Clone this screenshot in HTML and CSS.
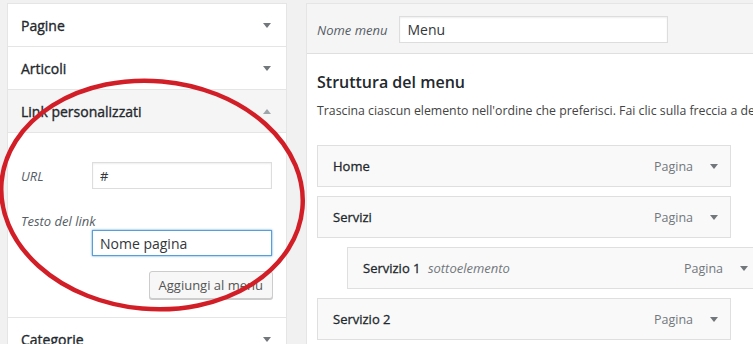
FILE: index.html
```html
<!DOCTYPE html>
<html lang="it">
<head>
<meta charset="utf-8">
<title>Menu</title>
<link rel="stylesheet" href="styles.css">
</head>
<body>
<div class="page">
  <div class="side">
    <div class="acc">
      <div class="acc-h"><span class="acc-t">Pagine</span><span class="arr down"></span></div>
    </div>
    <div class="acc">
      <div class="acc-h"><span class="acc-t">Articoli</span><span class="arr down"></span></div>
    </div>
    <div class="acc open">
      <div class="acc-h"><span class="acc-t">Link personalizzati</span><span class="arr up"></span></div>
      <div class="acc-body">
        <div class="field">
          <span class="lbl">URL</span>
          <input class="inp" type="text" value="#">
        </div>
        <div class="field stacked">
          <span class="lbl">Testo del link</span>
          <input class="inp focus" type="text" value="Nome pagina">
        </div>
        <div class="actions">
          <button class="btn" type="button">Aggiungi al menu</button>
        </div>
      </div>
    </div>
    <div class="acc">
      <div class="acc-h"><span class="acc-t">Categorie</span><span class="arr down"></span></div>
    </div>
  </div>

  <div class="main">
    <div class="main-head">
      <span class="lbl">Nome menu</span>
      <input class="inp name" type="text" value="Menu">
    </div>
    <div class="main-body">
      <h3 class="title">Struttura del menu</h3>
      <p class="desc">Trascina ciascun elemento nell'ordine che preferisci. Fai clic sulla freccia a destra dell'elemento per visualizzare altre opzioni di configurazione.</p>
      <ul class="menu">
        <li class="item"><span class="it-title">Home</span><span class="it-type">Pagina</span><span class="arr down"></span></li>
        <li class="item"><span class="it-title">Servizi</span><span class="it-type">Pagina</span><span class="arr down"></span></li>
        <li class="item sub"><span class="it-title">Servizio 1 <em class="subtag">sottoelemento</em></span><span class="it-type">Pagina</span><span class="arr down"></span></li>
        <li class="item"><span class="it-title">Servizio 2</span><span class="it-type">Pagina</span><span class="arr down"></span></li>
      </ul>
    </div>
  </div>

  <svg class="annot" width="753" height="344" viewBox="0 0 753 344" aria-hidden="true">
    <ellipse cx="152" cy="195" rx="151" ry="114" transform="rotate(5 152 195)" fill="none" stroke="#d21f27" stroke-width="4.5"/>
  </svg>
</div>
</body>
</html>
```

FILE: styles.css
```css
html, body {
  margin: 0;
  padding: 0;
}
body {
  background: #f1f1f1;
  font-family: "Open Sans", "Noto Sans", sans-serif;
  color: #23282d;
  font-size: 13px;
  overflow: hidden;
  width: 753px;
  height: 344px;
}
.page {
  position: relative;
  display: flex;
  align-items: flex-start;
  gap: 19px;
  padding: 3px 0 0 7px;
  width: 753px;
  height: 344px;
  box-sizing: border-box;
  overflow: hidden;
}
.side {
  width: 280px;
  flex: none;
  background: #fff;
  border: 1px solid #e5e5e5;
  border-bottom: none;
  box-sizing: border-box;
}
.acc {
  border-bottom: 1px solid #e5e5e5;
}
.acc-h {
  height: 42px;
  display: flex;
  align-items: center;
  justify-content: space-between;
  padding: 0 15px 0 13px;
  box-sizing: border-box;
  font-size: 14px;
  font-weight: 400;
  -webkit-text-stroke: 0.35px currentColor;
  color: #23282d;
}
.open .acc-h {
  background: #f5f5f5;
  border-bottom: 1px solid #e5e5e5;
  height: 43px;
}
.arr {
  width: 0;
  height: 0;
  border-left: 4px solid transparent;
  border-right: 4px solid transparent;
  flex: none;
}
.arr.down {
  border-top: 5px solid #72777c;
}
.arr.up {
  border-bottom: 5px solid #a0a5aa;
}
.acc-body {
  padding: 29px 14px 18px 13px;
}
.field {
  display: flex;
  align-items: center;
}
.lbl {
  font-style: italic;
  color: #555d66;
  font-size: 13px;
}
.field .lbl {
  width: 71px;
  flex: none;
}
.inp {
  font-family: inherit;
  font-size: 13px;
  color: #32373c;
  border: 1px solid #ddd;
  box-shadow: inset 0 1px 2px rgba(0, 0, 0, 0.07);
  background: #fff;
  height: 27px;
  padding: 0 7px;
  box-sizing: border-box;
  margin: 0;
  outline: none;
  border-radius: 0;
}
.field .inp {
  flex: 1;
  min-width: 0;
}
.field.stacked {
  flex-direction: column;
  align-items: stretch;
  margin-top: 23px;
}
.field.stacked .lbl {
  width: auto;
  line-height: 18px;
}
.field.stacked .inp {
  margin-left: 71px;
  height: 26px;
  flex: none;
  font-size: 14px;
}
.inp.focus {
  border-color: #5b9dd9;
  box-shadow: 0 0 2px rgba(30, 140, 190, 0.8);
}
.actions {
  display: flex;
  justify-content: flex-end;
  margin-top: 15px;
  margin-right: -1px;
}
.btn {
  font-family: inherit;
  font-size: 13px;
  color: #555;
  background: #f7f7f7;
  border: 1px solid #ccc;
  border-radius: 3px;
  box-shadow: 0 1px 0 #ccc;
  height: 28px;
  padding: 0 9px;
  margin: 0;
}

.main {
  width: 470px;
  flex: none;
  background: #fff;
  border: 1px solid #e5e5e5;
  border-right: none;
  box-sizing: border-box;
  height: 400px;
}
.main-head {
  display: flex;
  align-items: center;
  gap: 12px;
  background: #f5f5f5;
  border-bottom: 1px solid #dfdfdf;
  padding: 12px 0 10px 10px;
}
.inp.name {
  width: 269px;
  font-size: 14px;
}
.main-body {
  padding: 0 10px;
}
.title {
  margin: 16px 0 0;
  font-size: 16px;
  line-height: 24px;
  font-weight: 600;
  color: #23282d;
}
.desc {
  margin: 7px 0 0;
  line-height: 20px;
  font-size: 12.3px;
  white-space: nowrap;
  color: #444;
}
.menu {
  list-style: none;
  margin: 24px 0 0;
  padding: 0;
}
.item {
  width: 414px;
  height: 42px;
  box-sizing: border-box;
  background: #f9f9f9;
  border: 1px solid #dfdfdf;
  margin-bottom: 9px;
  display: flex;
  align-items: center;
  padding: 0 12px 0 15px;
}
.item.sub {
  margin-left: 30px;
}
.it-title {
  flex: 1;
  font-weight: 400;
  -webkit-text-stroke: 0.3px currentColor;
  font-size: 13px;
  color: #23282d;
}
.subtag {
  font-weight: 400;
  -webkit-text-stroke: 0;
  color: #72777c;
  margin-left: 4px;
}
.it-type {
  color: #72777c;
  font-size: 12.5px;
  margin-right: 17px;
}
.annot {
  position: absolute;
  left: 0;
  top: 0;
  pointer-events: none;
}
```
